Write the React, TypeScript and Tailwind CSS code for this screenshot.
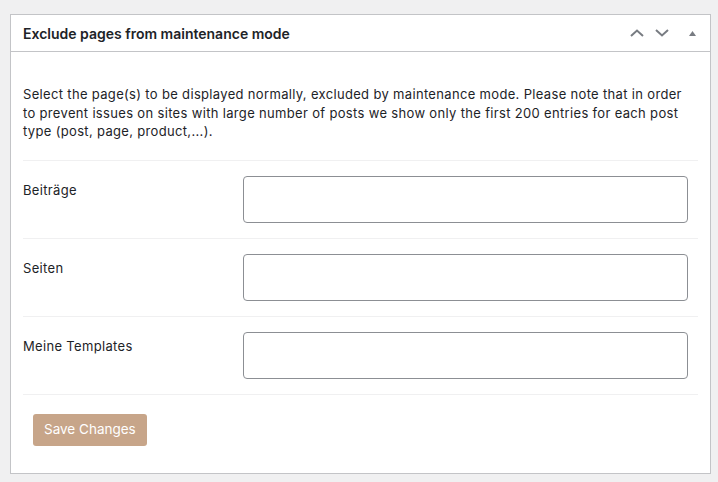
const fields = ["Beiträge", "Seiten", "Meine Templates"];

export default function App() {
  return (
    <div
      className="min-h-screen w-[718px] bg-[#f0f0f1] pl-[10px] pr-[7px] pt-[14px] text-[#1d2327]"
      style={{ fontFamily: "Inter, 'Liberation Sans', sans-serif" }}
    >
      <div className="h-[460px] border border-[#c3c4c7] bg-white">
        {/* Header */}
        <div className="flex h-[37px] items-center justify-between border-b border-[#c3c4c7] pl-[12px] pr-[14px]">
          <h2 className="text-[14px] font-semibold">Exclude pages from maintenance mode</h2>
          <div className="flex items-center text-[#787c82]">
            <svg width="14" height="8" viewBox="0 0 14 8" className="mr-[11px]">
              <path d="M1 7 L7 1.5 L13 7" fill="none" stroke="currentColor" strokeWidth="2" />
            </svg>
            <svg width="14" height="8" viewBox="0 0 14 8" className="mr-[20px]">
              <path d="M1 1 L7 6.5 L13 1" fill="none" stroke="currentColor" strokeWidth="2" />
            </svg>
            <svg width="7" height="5" viewBox="0 0 7 5">
              <path d="M0 5 L3.5 0 L7 5 Z" fill="currentColor" />
            </svg>
          </div>
        </div>

        {/* Body */}
        <div className="px-[12px] pt-[33px]">
          <p className="pr-[6px] text-[13px] leading-[18.5px] tracking-[0.33px]">
            Select the page(s) to be displayed normally, excluded by maintenance mode. Please note that in order
            to prevent issues on sites with large number of posts we show only the first 200 entries for each post
            type (post, page, product,...).
          </p>
          <div className="mt-[19px] border-t border-[#f0f0f1]">
            {fields.map((f) => (
              <div key={f} className="flex border-b border-[#f0f0f1] py-[15px] pr-[10px]">
                <div className="w-[220px] pt-[5px] text-[13px] leading-[18px] tracking-[0.33px]">{f}</div>
                <div className="h-[47px] flex-1 rounded-[4px] border border-[#8c8f94] bg-white" />
              </div>
            ))}
          </div>
          <button className="ml-[10px] mt-[19px] h-[32px] rounded-[3px] bg-[#c7a589] px-[11px] text-[13.5px] text-white">
            Save Changes
          </button>
        </div>
      </div>
    </div>
  );
}
